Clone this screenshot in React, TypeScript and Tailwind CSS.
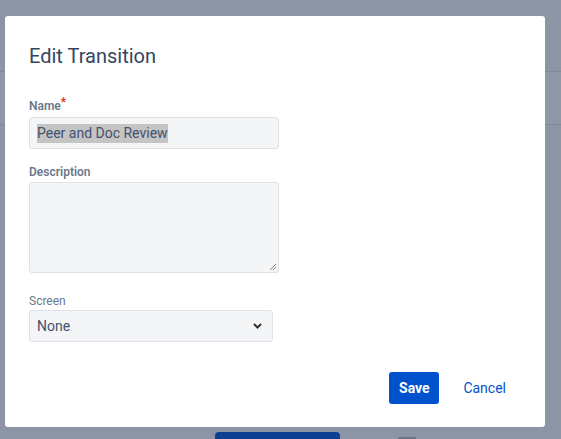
export default function App() {
  return (
    <div className="relative h-[439px] w-[561px] overflow-hidden bg-[#8c95a6]" style={{ fontFamily: 'Roboto, "Noto Sans", sans-serif' }}>
      <div className="h-[71px]" />
      <div className="h-[54px] border-y border-[#7f889a] bg-[#8e97a8]" />
      <div className="absolute left-[215px] top-[432px] h-[10px] w-[125px] rounded-t bg-[#0c3f8f]" />
      <div className="absolute left-[398px] top-[437px] h-[4px] w-[18px] bg-[#6c7587]" />

      <div className="absolute left-[5px] top-[16px] flex h-[411px] w-[540px] flex-col rounded-[3px] bg-white px-6 pt-[28px]">
        <h1 className="text-[20px] leading-6 text-[#344563]">Edit Transition</h1>

        <label className="mt-[30px] text-[12px] font-semibold leading-4 text-[#6b778c]">
          Name<span className="relative -top-[4px] text-[#de350b]">*</span>
        </label>
        <div className="mt-[3px] flex h-[32px] w-[250px] items-center rounded-[3px] border border-[#dfe1e6] bg-[#f4f5f7] px-[7px]">
          <span className="bg-[#c4c4c4] text-[14px] leading-[19px] text-[#42526e]">Peer and Doc Review</span>
        </div>

        <label className="mt-[15px] text-[12px] font-semibold leading-4 text-[#6b778c]">Description</label>
        <div className="relative mt-[2px] h-[91px] w-[250px] rounded-[3px] border border-[#dfe1e6] bg-[#f4f5f7]">
          <svg className="absolute bottom-[1px] right-[1px]" width="8" height="8" viewBox="0 0 8 8">
            <path d="M7 1L1 7M7 4L4 7" stroke="#888" strokeWidth="1" />
          </svg>
        </div>

        <label className="mt-[20px] text-[12px] leading-4 text-[#6b778c]">Screen</label>
        <div className="mt-[1px] flex h-[32px] w-[244px] items-center justify-between rounded-[3px] border border-[#dfe1e6] bg-[#f4f5f7] pl-[7px] pr-[10px]">
          <span className="text-[14px] text-[#42526e]">None</span>
          <svg width="9" height="6" viewBox="0 0 9 6">
            <path d="M1 1l3.5 3.5L8 1" stroke="#333" strokeWidth="2" fill="none" />
          </svg>
        </div>

        <div className="mt-[30px] flex items-center justify-end gap-[24px] pr-[15px]">
          <button className="h-[32px] w-[50px] rounded-[3px] bg-[#0052cc] text-[14px] font-bold text-white">Save</button>
          <button className="text-[14px] text-[#0052cc]">Cancel</button>
        </div>
      </div>
    </div>
  );
}
